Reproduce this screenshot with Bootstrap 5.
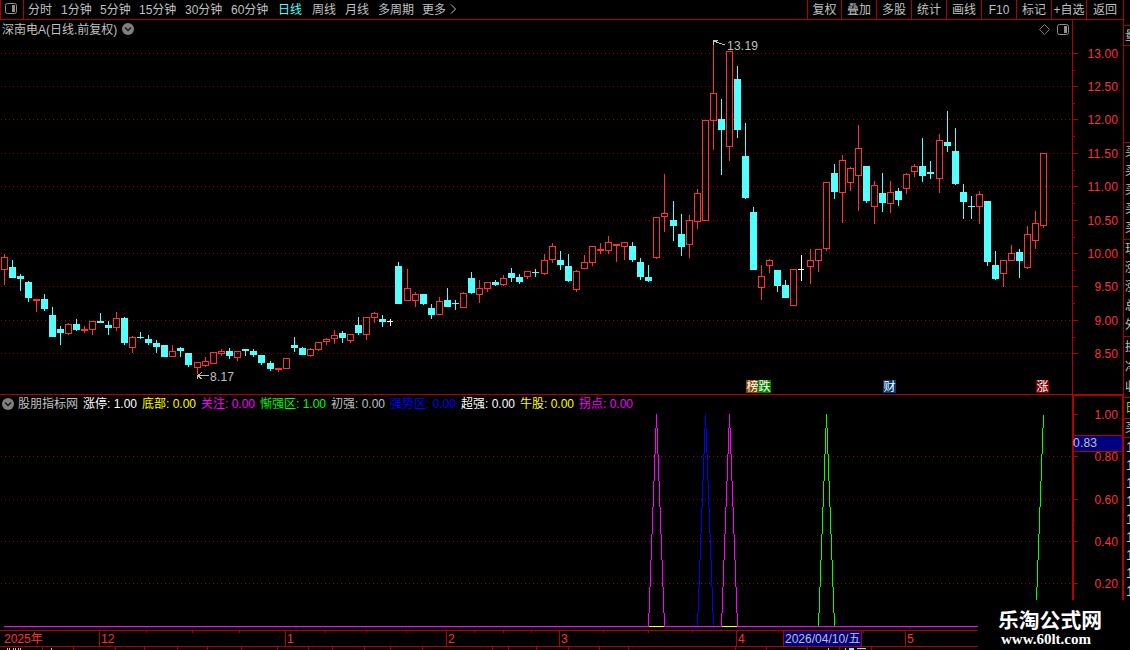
<!DOCTYPE html>
<html lang="zh-CN">
<head>
<meta charset="utf-8">
<title>深南电A 日线</title>
<link rel="stylesheet" href="https://cdn.jsdelivr.net/npm/bootstrap@5.3.0/dist/css/bootstrap.min.css">
<style>
:root{--line:#b00000;--up:#ff3232;--dn:#54ffff;--txt:#c0c0c0}
body{background:#000;color:var(--txt);font:12px/14px "Liberation Sans","Noto Sans CJK SC",sans-serif}
.terminal{width:1130px;height:650px;background:#000}
.main-col{width:1124px;border-right:1px solid var(--line)}
.toolbar{height:20px;border-bottom:1px solid var(--line);white-space:nowrap;line-height:20px}
.layout-btn{width:24px;border:solid var(--line);border-width:0 1px}
.periods{display:grid;grid-template-columns:33px 39px 39px 46px 46px 47px 34px 33px 33px 44px 28px 20px;margin-left:4px}
.actions{display:grid;grid-template-columns:34px repeat(7,35px) 37px}
.actions span{border-left:1px solid var(--line);text-align:center;height:19px}
.periods .on{color:var(--dn)}
.pane-k{height:375px}
.pane-i{height:235px}
svg{display:block}
svg text{font:12px "Liberation Sans","Noto Sans CJK SC",sans-serif}
.pane-head{height:18px;white-space:nowrap}
.pane-k .pane-head>span{padding:2px 0 0 2px}
.legend-grid{display:grid;grid-template-columns:65px 59px 59px 59px 71px 59px 71px 59px 59px 60px;margin-left:1px}
.tag{top:360px;width:13px;height:13px;line-height:14px;color:#fff;text-align:center}
.time-axis{height:17px;width:978px;border:solid var(--line);border-width:1px 0;display:grid;grid-template-columns:99px 186px 161px 113px 177px 47px 79px 43px 73px;color:var(--up);line-height:17px}
.time-axis span{border-left:1px solid var(--line);padding-left:1px;white-space:nowrap;height:15px}
.time-axis span:first-child{border:0;padding-left:4px}
.time-axis .cursor{background:#000080;color:var(--txt);border-right:1px solid var(--line);line-height:16px}
.foot{height:3px;line-height:10px}
.side{width:6px;white-space:nowrap}
.side div{border-bottom:1px solid var(--line);padding-left:1px;overflow:hidden}
.side .qty{padding-left:2px;border:0;font-size:14px}
.brand{left:978px;top:600px;width:152px;height:50px;background:#000;color:#fff}
.brand-cn{font:700 20.8px/24px "Noto Sans CJK SC",sans-serif;padding:7px 0 0 20px}
.brand-url{font:700 15px/16px "Liberation Serif",serif;padding-left:23px}
</style>
<script src="https://cdn.jsdelivr.net/npm/bootstrap@5.3.0/dist/js/bootstrap.bundle.min.js"></script>
</head>
<body>
<div class="terminal d-flex position-relative overflow-hidden">
 <div class="main-col d-flex flex-column flex-shrink-0">
  <header class="toolbar d-flex">
   <div class="layout-btn"><svg width="22" height="19"><rect x="4.5" y="3.5" width="11" height="10" rx="2" fill="none" stroke="#909090"/><rect x="11" y="5" width="3" height="7" fill="#909090"/></svg></div>
   <nav class="periods"><span>分时</span><span>1分钟</span><span>5分钟</span><span>15分钟</span><span>30分钟</span><span>60分钟</span><span class="on">日线</span><span>周线</span><span>月线</span><span>多周期</span><span>更多</span><svg width="8" height="19"><path d="M1 4.5L5.500 9L1 13.500" fill="none" stroke="#c0c0c0"/></svg></nav>
   <nav class="actions ms-auto"><span>复权</span><span>叠加</span><span>多股</span><span>统计</span><span>画线</span><span>F10</span><span>标记</span><span>+自选</span><span>返回</span></nav>
  </header>
  <section class="pane-k position-relative">
   <svg id="kline" width="1123" height="375" viewBox="0 20 1123 375" shape-rendering="crispEdges"></svg>
   <div class="pane-head d-flex align-items-center position-absolute top-0 start-0 w-100">
    <span>深南电A(日线.前复权)</span>
    <svg class="ms-1" width="14" height="14"><circle cx="7" cy="7" r="6" fill="#808080"/><path d="M4 5.500L7 8.500L10 5.500" fill="none" stroke="#181818" stroke-width="1.500"/></svg>
    <svg class="ms-auto" width="86" height="18"><path d="M7.500 4.500L12.500 9.500L7.500 14.500L2.500 9.500Z" fill="none" stroke="#808080"/><rect x="20.500" y="4.500" width="11" height="10" rx="2" fill="none" stroke="#909090"/><rect x="27" y="6" width="3" height="7" fill="#909090"/></svg>
   </div>
   <span class="tag position-absolute" style="left:746px;background:#8a4600">榜</span>
   <span class="tag position-absolute" style="left:758px;background:#008000">跌</span>
   <span class="tag position-absolute" style="left:883px;background:#003c70">财</span>
   <span class="tag position-absolute" style="left:1036px;background:#800000">涨</span>
  </section>
  <section class="pane-i position-relative">
   <svg id="indicator" width="1123" height="235" viewBox="0 395 1123 235" shape-rendering="crispEdges"></svg>
   <div class="pane-head d-flex align-items-center position-absolute top-0 start-0">
    <svg width="17" height="14"><circle cx="8" cy="7" r="6" fill="#808080"/><path d="M5 5.500L8 8.500L11 5.500" fill="none" stroke="#181818" stroke-width="1.500"/></svg>
    <div class="legend-grid"><span>股朋指标网</span><span style="color:#fff">涨停: 1.00</span><span style="color:#ff0">底部: 0.00</span><span style="color:#f0f">关注: 0.00</span><span style="color:#0f0">惭强区: 1.00</span><span>初强: 0.00</span><span style="color:#00f">强势区: 0.00</span><span style="color:#fff">超强: 0.00</span><span style="color:#ff0">牛股: 0.00</span><span style="color:#f0f">拐点: 0.00</span></div>
   </div>
  </section>
  <div class="time-axis position-relative"><span>2025年</span><span>12</span><span>1</span><span>2</span><span>3</span><span>4</span><span class="cursor">2026/04/10/五</span><span style="border:0"></span><span>5</span>
   <svg class="position-absolute top-0 start-0" id="weeks" width="978" height="2" shape-rendering="crispEdges"></svg>
  </div>
  <svg class="foot" id="foot" width="978" height="3" shape-rendering="crispEdges"></svg>
 </div>
 <aside class="side overflow-hidden d-flex flex-column" id="side"></aside>
 <div class="brand position-absolute"><div class="brand-cn">乐淘公式网</div><div class="brand-url">www.60lt.com</div></div>
</div>
<script>
// x, high, body top, body bottom, low, kind (r rising, c falling, w flat)
const data=`4 254 257 270 285 r|12 260 267 278 278 c|20 274 276 279 291 c|28 281 282 298 302 c|36 299 299 301 312 r|44 294 299 309 311 c|52 307 315 337 337 c|60 326 329 333 345 c|68 323 324 334 335 r|76 319 324 330 331 c|84 326 329 331 333 r|92 321 321 330 335 r|100 313 321 323 323 c|108 321 325 328 335 c|116 312 318 328 331 r|124 317 318 343 345 c|132 336 337 348 353 r|140 332 337 338 339 c|148 335 339 343 345 c|156 340 343 347 353 c|164 345 345 357 357 c|172 345 351 357 357 r|180 347 348 351 357 c|188 353 353 365 367 c|197 362 362 368 374 r|205 357 361 366 367 r|213 352 352 364 364 r|221 349 351 354 356 r|229 348 351 356 359 c|237 351 351 358 361 r|245 349 349 351 356 c|253 349 351 355 357 c|261 355 355 363 365 c|270 361 363 369 371 c|278 368 368 370 372 r|286 358 358 369 369 r|294 337 345 348 352 c|302 347 348 355 355 c|310 348 349 356 357 r|318 342 342 350 351 r|326 338 339 342 345 r|334 330 335 339 344 r|342 331 333 338 343 c|350 334 334 341 343 r|358 317 325 333 335 c|366 317 317 335 340 r|374 312 313 318 323 r|382 315 319 322 327 c|390 319 321 322 326 w|398 262 266 304 304 c|407 269 288 301 301 r|415 292 294 301 307 r|423 294 294 304 305 c|431 304 308 315 319 c|439 297 301 315 315 r|447 288 300 307 307 c|455 300 303 304 310 c|463 292 293 308 308 r|471 272 278 293 294 c|479 280 288 295 303 r|487 282 282 289 292 r|495 280 282 285 286 c|503 275 278 285 286 r|511 268 273 278 282 c|519 274 277 282 284 c|527 271 271 277 279 r|535 269 272 273 277 c|544 254 260 274 275 r|552 243 246 260 263 r|560 251 260 265 270 c|568 254 266 281 282 c|576 270 271 290 292 r|584 255 262 269 269 r|592 246 246 263 266 r|600 243 249 251 254 r|608 236 242 251 254 r|616 244 244 246 262 r|624 242 242 247 260 r|632 242 246 260 262 c|640 258 262 277 280 c|648 265 277 281 282 c|656 217 217 258 259 r|664 174 213 217 232 r|673 201 220 226 241 c|681 214 234 247 256 c|689 215 220 245 258 r|697 189 193 222 229 r|705 120 120 221 221 r|713 42 93 121 150 r|721 99 119 130 175 c|729 51 51 147 161 r|737 66 79 130 138 c|745 123 156 198 199 c|753 207 212 270 270 c|761 265 276 288 300 r|769 259 260 266 273 r|777 270 270 286 292 c|785 280 285 298 298 c|793 269 269 306 306 r|801 255 269 270 281 w|810 249 260 267 284 r|818 249 249 261 272 r|826 182 182 249 251 r|834 164 173 192 199 c|842 155 160 193 223 r|850 167 168 183 191 r|858 125 148 176 211 r|866 166 166 201 203 c|874 181 185 207 224 r|882 173 193 203 212 c|890 181 192 204 213 r|898 188 191 200 206 c|906 173 174 189 194 r|914 164 166 172 177 r|922 138 166 176 182 c|930 161 172 174 179 c|939 134 140 179 193 r|947 111 142 146 152 c|955 128 151 184 185 c|963 184 192 202 219 c|971 196 206 207 219 c|979 191 194 207 224 r|987 201 201 262 266 c|995 251 265 279 280 c|1003 260 260 274 287 r|1011 245 253 261 261 r|1019 249 252 261 278 c|1027 226 234 268 269 r|1035 211 223 241 249 r|1043 153 153 226 228 r`;
const L='#b00000',R=(x,y,w,h,f)=>`<rect x="${x}" y="${y}" width="${w}" height="${h}" fill="${f}"/>`;
const dots=y=>`<path d="M1 ${y}.5H1072" stroke="#a00000" stroke-dasharray="1 3"/>`;
const label=(y,t)=>`<text x="1118" y="${y+5}" text-anchor="end" textLength="${t.length>4?30.5:23.5}" fill="#ff3232">${t}</text>`;
let s='';
[53,86,119,153,186,220,253,286,320,353].forEach((y,i)=>{s+=dots(y)+R(1073,y,5,1,L)+label(y,(13-i/2).toFixed(2));});
[70,103,136,170,203,237,270,303,337].forEach(y=>s+=R(1073,y,2,1,L));
for(const row of data.split('|')){
 const p=row.split(' '),[x,h,t,b,l]=p.map(Number),k=p[5],c={r:'#ff3232',c:'#54ffff',w:'#fff'}[k];
 if(k==='r'){
  s+=R(x,h,1,t-h,c)+R(x,b,1,l-b,c);
  s+=b-t<3?R(x-3,t,7,b-t,c):`<rect x="${x-2.5}" y="${t+.5}" width="6" height="${b-t-1}" fill="none" stroke="${c}"/>`;
 }else s+=R(x,h,1,l-h,c)+R(x-3,t,k==='w'?6:7,b-t,c);
}
s+=R(1072,20,1,374,L)+R(0,394,1123,1,L);
s+='<path d="M197 375.500H209M197.500 375V379M198 375.500L202 372.500M198 376L202 379M713.500 45V40H718M714 41L719 43L725 45" fill="none" stroke="#c0c0c0"/>';
s+='<text x="210" y="381" textLength="24" fill="#c0c0c0">8.17</text><text x="727" y="50" textLength="31" fill="#c0c0c0">13.19</text>';
document.getElementById('kline').innerHTML=s;

s='';
[456,499,541,583].forEach(y=>s+=dots(y));
[414,456,499,541,583].forEach((y,i)=>s+=R(1074,y,4,1,L)+label(y,(1-i/5).toFixed(2)));
[478,520,562].forEach(y=>s+=R(1074,y,1,1,L));
const steps=[414,428,454,481,507,534,560,587,613,626];
const spike=(x,c,half)=>{for(let k=0;k<(half?8:9);k++){const y=steps[k]+(half&&!k?1:0),h=(half&&k===7?600:steps[k+1])-y;s+=R(x-k,y,1,h,c);if(!half)s+=R(x+k,y,1,h,c);}};
spike(656,'#f0f');spike(705,'#00f');spike(729,'#f0f');spike(826,'#0f0');spike(1043,'#0f0',true);
s+=R(4,626,974,1,'#f0f')+R(649,626,15,1,'#ff0')+R(722,626,15,1,'#ff0');
s+=R(1072,395,2,205,L)+R(1122,395,1,205,L)+R(1072,395,51,1,L)+R(1074,435,48,17,L)+R(1074,436,48,15,'#000080');
s+='<text x="1073" y="447" textLength="24" fill="#c0c0c0">0.83</text>';
document.getElementById('indicator').innerHTML=s;

document.getElementById('weeks').innerHTML=[146,192,239,325,366,406,474,503,531,603,648,692,778,863].map(x=>R(x,0,1,2,L)).join('');
document.getElementById('foot').innerHTML=[42,73,115,144,177,207,241,277,308,332,364,390,422,492,508,536,568,599,628,735,766,807,839,871].map(x=>R(x,0,1,3,L)).join('')
 +[7,9,13,15,18,20,51,828,845].map(x=>R(x,1,1,2,'#c0c0c0')).join('')+R(849,1,5,2,'#54ffff')+R(857,1,9,1,'#54ffff');

// quote panel cells: height, line height, glyphs, colour
document.getElementById('side').innerHTML=[[26,26,''],[20,20,'量'],[97,19,''],[97,19,'买买买买买'],[97,19,'现涨涨总外'],[61,20,'换净收'],[21,21,'日','#c0c000'],[19,19,'买'],[163,18,'111111111','#d0d0d0']]
 .map(([h,l,t,c],i)=>`<div class="flex-shrink-0 ${i===8?'qty':''}" style="height:${h}px;line-height:${l}px;color:${c||'#c0c0c0'}">${[...t].join('<br>')}</div>`).join('');
</script>
</body>
</html>
